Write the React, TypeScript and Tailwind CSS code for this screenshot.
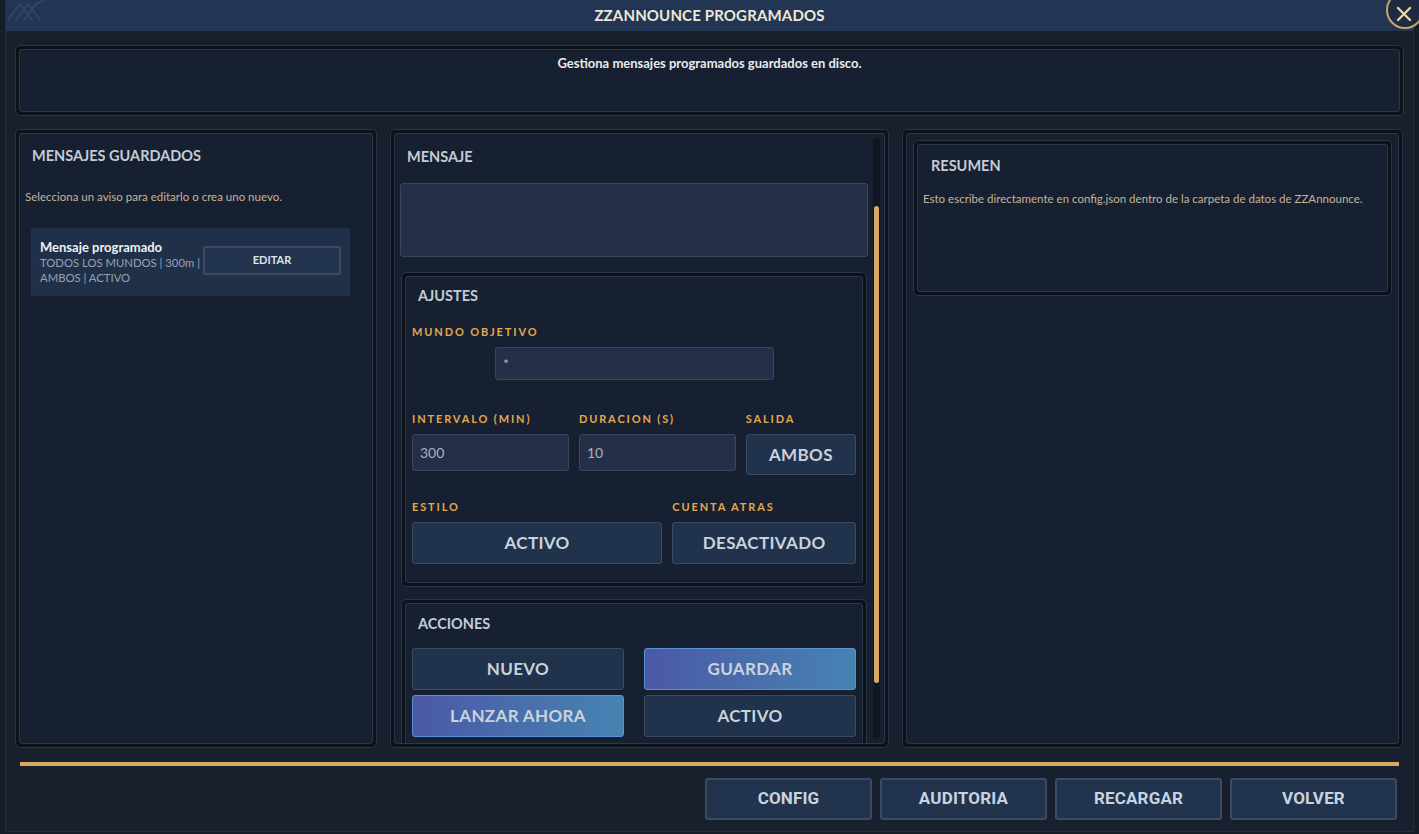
import clsx from 'clsx';
import type { ReactNode } from 'react';

const font = { fontFamily: 'Lato, "Noto Sans", "Liberation Sans", sans-serif' };

const Frame = ({ className, innerClassName, children }: { className?: string; innerClassName?: string; children?: ReactNode }) => (
  <div className={clsx('rounded-[5px] border border-[#2a3442] bg-[#0c121a] p-[3px]', className)}>
    <div className={clsx('h-full rounded-[3px] border border-[#2c3746] bg-[#172030]', innerClassName)}>{children}</div>
  </div>
);

const GoldLabel = ({ children }: { children: ReactNode }) => (
  <div className="text-[11px] font-bold leading-[16px] tracking-[0.17em] text-[#e3a84f]">{children}</div>
);

const Btn = ({ children, accent, className }: { children: ReactNode; accent?: boolean; className?: string }) => (
  <button
    className={clsx(
      'flex items-center justify-center rounded-[3px] border text-[17px] font-bold tracking-[0.02em] text-[#c9d3de]',
      accent
        ? 'border-[#5b93d6] bg-gradient-to-r from-[#4b58a6] to-[#4583b2]'
        : 'border-[#3b4b64] bg-[#21324c]',
      className
    )}
  >
    {children}
  </button>
);

const Field = ({ value, className }: { value: string; className?: string }) => (
  <div className={clsx('flex items-center rounded-[3px] border border-[#3a465c] bg-[#252f48] px-[7px] text-[14px] text-[#aab3c0]', className)}>
    {value}
  </div>
);

const Heading = ({ children, className }: { children: ReactNode; className?: string }) => (
  <div className={clsx('text-[14.5px] font-bold leading-[20px] text-[#c3ccd6]', className)}>{children}</div>
);

export default function App() {
  return (
    <div className="relative h-[834px] w-[1419px] overflow-hidden bg-[#151d28]" style={font}>
      {/* window */}
      <div className="mx-[5px] flex h-[832px] flex-col border-x border-b border-[#26303d] bg-[#17202c]">
        {/* title bar */}
        <div className="relative flex h-[31px] shrink-0 items-center justify-center bg-[#223553]">
          <svg className="absolute left-0 top-0" width="44" height="22" viewBox="0 0 44 22" fill="none" stroke="#2f4666" strokeWidth="2">
            <path d="M2 20 L14 4 L26 20" />
            <path d="M10 20 L22 4 L34 20" />
            <path d="M18 20 L30 4 L42 -2" />
          </svg>
          <span className="text-[15px] font-bold tracking-[0.01em] text-[#f1e7d6]">ZZANNOUNCE PROGRAMADOS</span>
        </div>

        <div className="flex flex-1 flex-col px-[9px]">
          {/* header */}
          <Frame className="mt-[14px] h-[71px]" innerClassName="pt-[4px]">
            <div className="text-center text-[13px] font-bold leading-[18px] text-[#e8eaee]">
              Gestiona mensajes programados guardados en disco.
            </div>
          </Frame>

          {/* columns */}
          <div className="mt-[13px] flex h-[619px] gap-[13px]">
            {/* left */}
            <Frame className="w-[362px]" innerClassName="px-[5px]">
              <Heading className="pl-[7px] pt-[12px]">MENSAJES GUARDADOS</Heading>
              <div className="mt-[23px] text-[11.5px] leading-[16px] text-[#c5b49a]">Selecciona un aviso para editarlo o crea uno nuevo.</div>
              <div className="ml-[6px] mt-[23px] flex h-[68px] w-[319px] items-center bg-[#203049] px-[9px]">
                <div className="flex-1 leading-[15px]">
                  <div className="text-[13px] font-bold text-[#eef0f3]">Mensaje programado</div>
                  <div className="text-[11.3px] text-[#97a2b1]">TODOS LOS MUNDOS | 300m |</div>
                  <div className="text-[11.3px] text-[#97a2b1]">AMBOS | ACTIVO</div>
                </div>
                <button className="-mt-[4px] flex h-[29px] w-[138px] items-center justify-center rounded-[2px] border-2 border-[#3a4a63] bg-[#22334d] text-[11px] font-bold text-[#dfe4ea]">
                  EDITAR
                </button>
              </div>
            </Frame>

            {/* middle */}
            <Frame className="w-[499px]" innerClassName="relative overflow-hidden pl-[5px] pr-[16px]">
              <Heading className="pl-[7px] pt-[13px]">MENSAJE</Heading>
              <div className="mt-[16px] h-[74px] rounded-[3px] border border-[#3a465c] bg-[#252f48]" />

              <Frame className="ml-[1px] mr-[1px] mt-[15px] h-[315px]" innerClassName="px-[6px]">
                <Heading className="pl-[6px] pt-[9px]">AJUSTES</Heading>
                <div className="mt-[18px]">
                  <GoldLabel>MUNDO OBJETIVO</GoldLabel>
                </div>
                <Field value="*" className="ml-[83px] mt-[7px] h-[33px] w-[279px]" />
                <div className="mt-[31px] flex gap-[10px]">
                  <div className="w-[158px]">
                    <GoldLabel>INTERVALO (MIN)</GoldLabel>
                    <Field value="300" className="mt-[7px] h-[37px]" />
                  </div>
                  <div className="w-[158px]">
                    <GoldLabel>DURACION (S)</GoldLabel>
                    <Field value="10" className="mt-[7px] h-[37px]" />
                  </div>
                  <div className="w-[111px]">
                    <GoldLabel>SALIDA</GoldLabel>
                    <Btn className="mt-[7px] h-[41px] w-full">AMBOS</Btn>
                  </div>
                </div>
                <div className="mt-[24px] flex gap-[10px]">
                  <div className="w-[252px]">
                    <GoldLabel>ESTILO</GoldLabel>
                    <Btn className="mt-[7px] h-[42px] w-full">ACTIVO</Btn>
                  </div>
                  <div className="w-[185px]">
                    <GoldLabel>CUENTA ATRAS</GoldLabel>
                    <Btn className="mt-[7px] h-[42px] w-full">DESACTIVADO</Btn>
                  </div>
                </div>
              </Frame>

              <Frame className="ml-[1px] mr-[1px] mt-[12px] h-[170px]" innerClassName="px-[6px]">
                <Heading className="pl-[6px] pt-[10px]">ACCIONES</Heading>
                <div className="mt-[14px] grid grid-cols-2 gap-x-[20px] gap-y-[5px]">
                  <Btn className="h-[42px]">NUEVO</Btn>
                  <Btn accent className="h-[42px]">
                    GUARDAR
                  </Btn>
                  <Btn accent className="h-[42px]">
                    LANZAR AHORA
                  </Btn>
                  <Btn className="h-[42px]">ACTIVO</Btn>
                </div>
              </Frame>

              {/* scrollbar */}
              <div className="absolute bottom-[4px] right-[4px] top-[4px] w-[7px] rounded-full bg-[#101722]">
                <div className="absolute left-[1px] top-[68px] h-[477px] w-[5px] rounded-full bg-[#d6aa62]" />
              </div>
            </Frame>

            {/* right */}
            <Frame className="w-[501px]" innerClassName="px-[6px] pt-[6px]">
              <Frame className="h-[156px]" innerClassName="px-[5px]">
                <Heading className="pl-[8px] pt-[11px]">RESUMEN</Heading>
                <div className="mt-[15px] text-[11.5px] leading-[16px] text-[#c5b49a]">
                  Esto escribe directamente en config.json dentro de la carpeta de datos de ZZAnnounce.
                </div>
              </Frame>
            </Frame>
          </div>

          {/* divider */}
          <div className="ml-[5px] mr-[5px] mt-[14px] h-[4px] bg-[#d8aa5d]" />

          {/* footer */}
          <div className="mt-[12px] flex justify-end gap-[8px] pr-[7px]">
            {['CONFIG', 'AUDITORIA', 'RECARGAR', 'VOLVER'].map((b) => (
              <button
                key={b}
                className="flex h-[42px] w-[167px] items-center justify-center rounded-[3px] border-2 border-[#3a4b65] bg-[#22334d] text-[17px] font-bold tracking-[0.01em] text-[#c8d3df]"
                style={{ fontFamily: '"Roboto", "Liberation Sans", sans-serif' }}
              >
                {b}
              </button>
            ))}
          </div>
        </div>
      </div>

      {/* close button */}
      <div className="absolute right-[-5px] top-[-9px] flex h-[38px] w-[38px] items-center justify-center rounded-full border-2 border-[#c9a46a] bg-[#1d2b41]">
        <svg width="18" height="18" viewBox="0 0 18 18" className="-ml-[2px] mt-[7px]" stroke="#ead4a6" strokeWidth="2.4" strokeLinecap="round">
          <path d="M3 3 L15 15 M15 3 L3 15" />
        </svg>
      </div>
    </div>
  );
}
